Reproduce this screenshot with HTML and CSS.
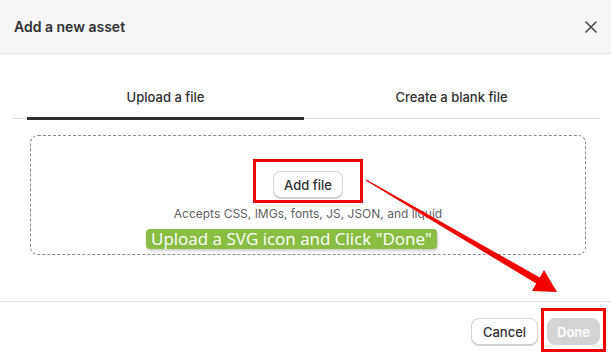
FILE: index.html
```html
<!DOCTYPE html>
<html lang="en">

<head>
    <meta charset="UTF-8">
    <meta name="viewport" content="width=device-width, initial-scale=1.0">
    <title>Add a new asset</title>
    <link rel="stylesheet" href="styles.css">
</head>

<body>
    <div class="modal">
        <div class="modal-header">
            <h1>Add a new asset</h1>
            <button class="close-btn" aria-label="Close">
                <svg width="12" height="12" viewBox="0 0 12 12">
                    <path d="M1 1 L11 11 M11 1 L1 11" stroke="#4a4a4a" stroke-width="1.6" stroke-linecap="round" />
                </svg>
            </button>
        </div>

        <div class="modal-body">
            <div class="tabs">
                <button class="tab selected">Upload a file</button>
                <button class="tab">Create a blank file</button>
            </div>

            <div class="dropzone">
                <div class="mark-wrap">
                    <button class="btn">Add file</button>
                    <span class="mark mark-add"></span>
                </div>
                <p class="hint">Accepts CSS, IMGs, fonts, JS, JSON, and liquid</p>
                <div class="note">Upload a SVG icon and Click "Done"</div>
            </div>
        </div>

        <div class="modal-footer">
            <button class="btn btn-cancel">Cancel</button>
            <div class="mark-wrap">
                <button class="btn btn-primary" disabled>Done</button>
                <span class="mark mark-done"></span>
            </div>
        </div>
    </div>

    <svg class="arrow" width="611" height="363" viewBox="0 0 611 363">
        <polygon points="366.3,179.5 539.8,277.5 544,270 557,292 532,291 536.2,283.5 365.7,180.5" fill="#f20000" />
    </svg>
</body>

</html>
```

FILE: styles.css
```css
body {
    margin: 0;
    font-family: 'Inter', 'Liberation Sans', sans-serif;
    color: #303030;
    background: #fff;
    position: relative;
    height: 363px;
    overflow: hidden;
}

.modal {
    width: 611px;
    height: 363px;
    background: #fff;
}

.modal-header {
    height: 53px;
    padding: 0 14px;
    display: flex;
    align-items: center;
    justify-content: space-between;
    background: #f6f6f6;
    border-bottom: 1px solid #e3e3e3;
}

.modal-header h1 {
    margin: 0;
    font-size: 14px;
    font-weight: 600;
    color: #303030;
}

.close-btn {
    border: none;
    background: none;
    padding: 0;
    width: 12px;
    height: 12px;
    display: flex;
    cursor: pointer;
}

.modal-body {
    padding-top: 24px;
}

.tabs {
    display: flex;
    gap: 9px;
    margin: 0 11px 0 12px;
    padding-left: 15px;
    border-bottom: 1px solid #e3e3e3;
}

.tab {
    width: 277px;
    padding: 10px 0 11px;
    border: none;
    border-bottom: 3px solid transparent;
    margin-bottom: -2px;
    background: none;
    font-family: inherit;
    font-size: 13px;
    font-weight: 500;
    line-height: 18px;
    color: #303030;
    cursor: pointer;
}

.tab.selected {
    border-bottom-color: #303030;
}

.dropzone {
    margin: 16px 25px 0 30px;
    padding: 35px 0 5px;
    border: 1px dashed #8a8a8a;
    border-radius: 8px;
    display: flex;
    flex-direction: column;
    align-items: center;
}

.mark-wrap {
    position: relative;
    display: flex;
}

.btn {
    height: 27px;
    padding: 0 10px;
    border: 1px solid #d4d4d4;
    border-radius: 8px;
    background: #fff;
    box-shadow: 0 1px 0 #cfcfcf;
    font-family: inherit;
    font-size: 13px;
    font-weight: 500;
    color: #303030;
    cursor: pointer;
}

.btn-cancel {
    padding: 0 11px;
}

.btn-primary {
    padding: 0 9px;
    border-color: #d4d4d4;
    background: #d4d4d4;
    box-shadow: none;
    color: #fff;
    font-weight: 600;
}

.mark {
    position: absolute;
    border: 3px solid #ee0000;
    pointer-events: none;
}

.mark-add {
    left: -20px;
    right: -20px;
    top: -12px;
    bottom: -5px;
}

.mark-done {
    left: -6px;
    right: -6px;
    top: -10px;
    bottom: -7px;
}

.hint {
    margin: 8px 0 0;
    font-size: 12px;
    line-height: 16px;
    color: #616161;
}

.note {
    align-self: flex-start;
    margin: 7px 0 0 115px;
    padding: 0 5px;
    height: 20px;
    line-height: 20px;
    background: #8bbd45;
    border-radius: 4px;
    box-shadow: 1px 2px 3px rgba(0, 0, 0, 0.2);
    font-family: 'Open Sans', sans-serif;
    font-size: 17px;
    color: #fff;
    white-space: nowrap;
}

.modal-footer {
    margin-top: 46px;
    padding: 16px 11px 0;
    border-top: 1px solid #e3e3e3;
    display: flex;
    justify-content: flex-end;
    gap: 9px;
}

.arrow {
    position: absolute;
    left: 0;
    top: 0;
    pointer-events: none;
}
```
